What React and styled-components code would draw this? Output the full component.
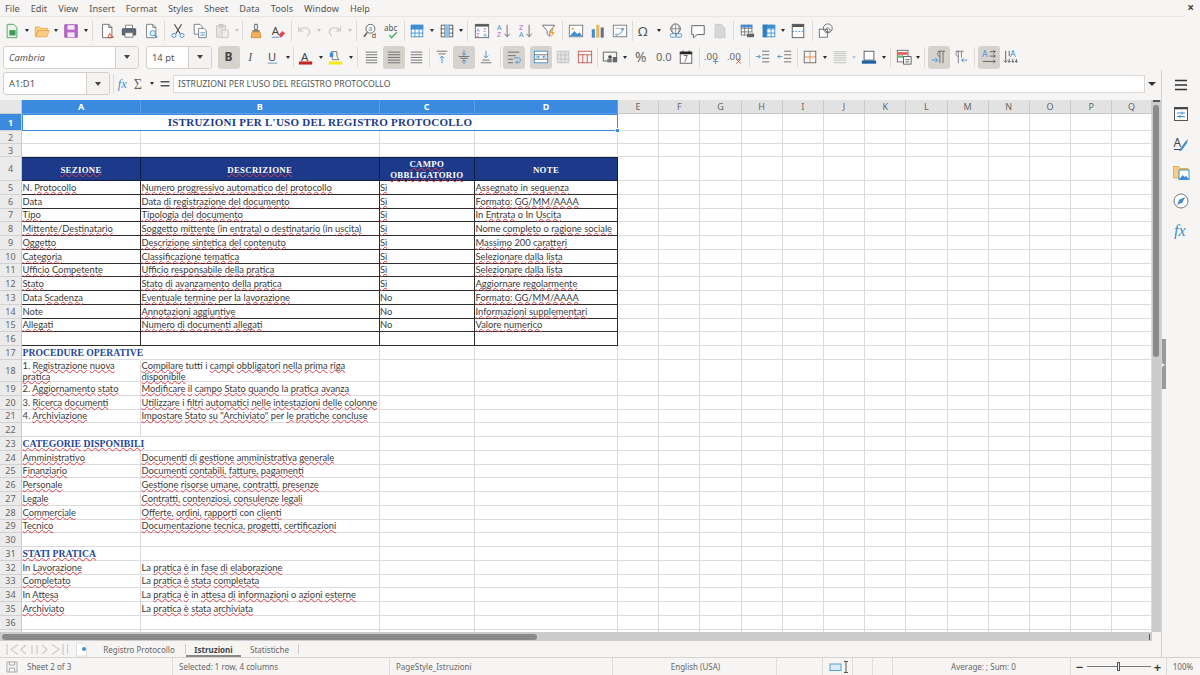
import React from "react";
import styled, { createGlobalStyle } from "styled-components";

const GlobalStyle = createGlobalStyle`
    html, body {
        margin: 0;
        padding: 0;
        background: #f6f5f4;
        overflow: hidden;
    }
    * {
        box-sizing: border-box;
    }
`;

const uiFont = `"Noto Sans", "Open Sans", sans-serif`;
const serifFont = `"Liberation Serif", "DejaVu Serif", serif`;

// layout
const Window = styled.div`
    width: 1200px;
    height: 675px;
    display: flex;
    flex-direction: column;
    overflow: hidden;
    font-family: ${uiFont};
    color: #4a4a4a;
    background: #f6f5f4;
`;

const MenuBar = styled.div`
    height: 17px;
    flex: none;
    display: flex;
    align-items: center;
    padding-left: 5px;
    gap: 11px;
    font-size: 9.2px;
    color: #555;
    border-bottom: 1px solid #e8e6e3;
    margin-right: 16px;
    position: relative;
`;

const CloseMark = styled.span`
    position: absolute;
    right: -10px;
    top: 1px;
    font-size: 12px;
    font-weight: 700;
    color: #444;
    line-height: 14px;
`;

const ToolRow = styled.div`
    height: ${(p) => p.$h}px;
    flex: none;
    display: flex;
    align-items: center;
    padding-left: ${(p) => p.$left}px;
`;

const ToolButton = styled.span`
    width: ${(p) => p.$w || 22}px;
    height: 23px;
    flex: none;
    display: inline-flex;
    align-items: center;
    justify-content: center;
    border-radius: 3px;
    background: ${(p) => (p.$active ? "#d6d3cf" : "transparent")};

    svg {
        width: 16px;
        height: 16px;
        flex: none;
        display: block;
    }
`;

const DropArrow = styled.span`
    width: 7.5px;
    height: 10px;
    flex: none;
    display: inline-flex;
    align-items: center;
    justify-content: center;

    &::after {
        content: "";
        border-left: 2.5px solid transparent;
        border-right: 2.5px solid transparent;
        border-top: 3px solid ${(p) => (p.$off ? "#c4c4c4" : "#2b2b2b")};
    }
`;

const Separator = styled.span`
    width: ${(p) => p.$w}px;
    height: 20px;
    flex: none;
    display: inline-flex;
    justify-content: center;

    &::after {
        content: "";
        width: 1px;
        height: 100%;
        background: ${(p) => (p.$line ? "#dfdcd8" : "transparent")};
    }
`;

const Combo = styled.div`
    width: ${(p) => p.$w}px;
    height: 23px;
    flex: none;
    display: flex;
    margin-right: ${(p) => p.$mr || 0}px;
    border: 1px solid #d3cfca;
    border-radius: 3px;
    background: #fff;
    overflow: hidden;
`;

const ComboText = styled.div`
    flex: 1;
    display: flex;
    align-items: center;
    padding-left: 5px;
    font-size: 9.4px;
    font-style: ${(p) => (p.$italic ? "italic" : "normal")};
    color: #555;
`;

const ComboButton = styled.div`
    width: 23px;
    flex: none;
    display: flex;
    align-items: center;
    justify-content: center;
    background: #f4f3f1;
    border-left: 1px solid #d3cfca;

    &::after {
        content: "";
        border-left: 3.5px solid transparent;
        border-right: 3.5px solid transparent;
        border-top: 4px solid #444;
    }
`;

const Content = styled.div`
    flex: 1;
    min-height: 0;
    display: flex;
`;

const MainColumn = styled.div`
    width: 1161px;
    flex: none;
    display: flex;
    flex-direction: column;
`;

const FormulaBar = styled.div`
    height: 30px;
    flex: none;
    display: flex;
    align-items: center;
    padding: 0 0 3px 3px;
`;

const FormulaInput = styled.div`
    width: 972px;
    height: 18px;
    flex: none;
    margin-left: 1px;
    padding-left: 4px;
    display: flex;
    align-items: center;
    font-size: 8.7px;
    color: #555;
    background: #fff;
    border: 1px solid #dcd9d5;
`;

const FormulaArrow = styled.span`
    margin-left: 3px;
    border-left: 4px solid transparent;
    border-right: 4px solid transparent;
    border-top: 4px solid #333;
`;

const SheetArea = styled.div`
    height: 532px;
    flex: none;
    display: flex;
    overflow: hidden;
`;

const Grid = styled.div`
    width: 1152px;
    flex: none;
    display: grid;
    grid-template-columns: 22px 119px 238.5px 95.5px 143px repeat(12, 41.2px) 1fr;
    grid-template-rows: 14px 17px 13px 13px 24px repeat(13, 13.75px) 22.25px repeat(19, 13.75px);
    background: #fff;
    font-family: Lato, "Open Sans", sans-serif;
    font-size: 9.35px;
    line-height: 11px;
    color: #3a3a3a;
    overflow: hidden;
`;

const Corner = styled.div`
    background: #e6e6e6;
    border-right: 1px solid #c9c9c9;
    border-bottom: 1px solid #c9c9c9;
`;

const ColumnHead = styled.div`
    display: flex;
    align-items: center;
    justify-content: center;
    font-family: ${uiFont};
    font-size: 9px;
    font-weight: ${(p) => (p.$on ? 700 : 400)};
    color: ${(p) => (p.$on ? "#fff" : "#666")};
    background: ${(p) => (p.$on ? "#3a8ae0" : "#e2e2e2")};
    border-right: 1px solid ${(p) => (p.$on ? "#5c9fe6" : "#c9c9c9")};
    border-bottom: 1px solid ${(p) => (p.$on ? "#5c9fe6" : "#c9c9c9")};
`;

const RowHead = styled.div`
    display: flex;
    align-items: center;
    justify-content: center;
    font-family: ${uiFont};
    font-size: 9px;
    font-weight: ${(p) => (p.$on ? 700 : 400)};
    color: ${(p) => (p.$on ? "#fff" : "#666")};
    background: ${(p) => (p.$on ? "#3a8ae0" : "#ebebeb")};
    border-right: 1px solid #c9c9c9;
    border-bottom: 1px solid #d2d2d2;
`;

const Cell = styled.div`
    padding: ${(p) => (p.$wrap ? "1px" : "0")} 0 0 0.5px;
    display: flex;
    align-items: center;
    white-space: ${(p) => (p.$wrap ? "normal" : "nowrap")};
    border-right: 1px solid ${(p) => (p.$box ? "#2d2d2d" : p.$noLine ? "transparent" : "#dcdcdc")};
    border-bottom: 1px solid ${(p) => (p.$box ? "#2d2d2d" : "#dcdcdc")};
`;

const HeadCell = styled.div`
    display: flex;
    align-items: center;
    justify-content: center;
    text-align: center;
    padding-top: 2px;
    font-family: ${serifFont};
    font-size: 8.8px;
    line-height: 11px;
    font-weight: 700;
    letter-spacing: 0.3px;
    color: #fff;
    background: #1d3a8a;
    border-right: 1px solid #101c40;
    border-bottom: 1px solid #101c40;
    border-top: 1px solid #101c40;
`;

const TitleCell = styled.div`
    grid-column: span 4;
    position: relative;
    display: flex;
    align-items: center;
    justify-content: center;
    font-family: ${serifFont};
    font-size: 11px;
    font-weight: 700;
    letter-spacing: 0.25px;
    color: #1d3a8a;
    border: 1.5px solid #3a8ae0;
    border-left-width: 1px;
`;

const SelectHandle = styled.span`
    position: absolute;
    right: -3px;
    bottom: -3px;
    width: 5px;
    height: 5px;
    background: #3a8ae0;
    border: 1px solid #fff;
`;

const SectionText = styled.span`
    padding-top: 1px;
    font-family: ${serifFont};
    font-size: 9.7px;
    font-weight: 700;
    color: #25479a;
`;

const Misspelt = styled.span`
    text-decoration: underline wavy #d8404a 0.7px;
    text-underline-offset: 0;
    text-decoration-skip-ink: none;
`;

const ScrollTrackV = styled.div`
    width: 9px;
    flex: none;
    position: relative;
    background: #cbcbcb;
`;

const ScrollThumbV = styled.div`
    position: absolute;
    top: 5px;
    left: 1px;
    width: 6px;
    height: 252px;
    border-radius: 3px;
    background: #8a8a8a;
`;

const ScrollTopMark = styled.div`
    height: 2px;
    margin: 0 1px;
    background: #555;
`;

const ScrollTrackH = styled.div`
    height: 9px;
    width: 1152px;
    flex: none;
    position: relative;
    background: #cbcbcb;
`;

const ScrollThumbH = styled.div`
    position: absolute;
    left: 2px;
    top: 2px;
    width: 535px;
    height: 6px;
    border-radius: 3px;
    background: #8a8a8a;
`;

const ScrollEndMark = styled.div`
    position: absolute;
    right: 2px;
    top: 2px;
    width: 1px;
    height: 6px;
    background: #555;
`;

const TabBar = styled.div`
    flex: 1;
    display: flex;
    align-items: center;
    padding-left: 6px;
    font-size: 8px;
    color: #666;
`;

const TabNav = styled.svg`
    width: 60px;
    height: 13px;
    flex: none;
`;

const TabDivider = styled.span`
    width: 1px;
    height: 10px;
    flex: none;
    background: #cfcbc6;
    margin: ${(p) => p.$m || "0"};
`;

const AddSheet = styled.svg`
    width: 13px;
    height: 15px;
    flex: none;
    margin: 0 7px 0 7px;
`;

const Tab = styled.span`
    height: 100%;
    width: ${(p) => p.$w}px;
    flex: none;
    display: flex;
    align-items: center;
    justify-content: center;
    font-weight: ${(p) => (p.$on ? 700 : 400)};
    color: ${(p) => (p.$on ? "#444" : "#666")};
    border-bottom: 2px solid ${(p) => (p.$on ? "#8a8a8a" : "transparent")};
    padding-top: 2px;
`;

const StatusBar = styled.div`
    height: 18px;
    flex: none;
    display: flex;
    align-items: center;
    font-size: 8px;
    color: #666;
    border-top: 1px solid #d6d3cf;
`;

const StatusCell = styled.div`
    width: ${(p) => p.$w}px;
    height: 100%;
    flex: none;
    display: flex;
    align-items: center;
    justify-content: ${(p) => p.$justify || "flex-start"};
    padding-left: ${(p) => p.$pad || 0}px;
    border-right: 1px solid ${(p) => (p.$plain ? "transparent" : "#e0ddd9")};
    gap: ${(p) => p.$gap || 0}px;
    position: relative;
`;

const StatusIcon = styled.svg`
    width: 14px;
    height: 14px;
    flex: none;
`;

const ZoomTrack = styled.div`
    width: 64px;
    height: 1px;
    background: #777;
    position: relative;
    flex: none;
`;

const ZoomKnob = styled.div`
    position: absolute;
    left: 30px;
    top: -4px;
    width: 3px;
    height: 9px;
    background: #eee;
    border: 1px solid #555;
`;

const ZoomSign = styled.span`
    font-size: 13px;
    font-weight: 600;
    color: #333;
    width: 14px;
    text-align: center;
    line-height: 12px;
`;

const Sidebar = styled.div`
    flex: 1;
    position: relative;
    display: flex;
    flex-direction: column;
    align-items: center;
    border-left: 1px solid #d6d3cf;
    padding: 4px 0 0 0;
    gap: 7px;
`;

const SideIcon = styled.span`
    width: 22px;
    height: 22px;
    flex: none;
    display: flex;
    align-items: center;
    justify-content: center;

    svg {
        width: 18px;
        height: 18px;
        display: block;
    }
`;

const SideGrip = styled.div`
    position: absolute;
    left: 0;
    top: 269px;
    width: 4px;
    height: 50px;
    background: #9a9a9a;

    &::after {
        content: "";
        position: absolute;
        left: 0;
        top: 24px;
        border-left: 3px solid #eee;
        border-top: 2.5px solid transparent;
        border-bottom: 2.5px solid transparent;
    }
`;

// icons, all drawn on an 18x18 box
const T = ({ x, y, s = 9, c = "#444", w = 400, i, f = "Noto Sans", children }) => (
    <text x={x} y={y} fontSize={s} fill={c} fontWeight={w} fontStyle={i ? "italic" : "normal"} fontFamily={f}>
        {children}
    </text>
);
const Lines = ({ c = "#555", rows, x1 = 2, x2 = 16 }) => (
    <path d={rows.map((y) => `M${x1} ${y}H${x2}`).join("")} stroke={c} fill="none" />
);
const Doc = ({ c = "#777", fill = "#fff" }) => (
    <path d="M4 1.5h7l3.5 3.5v11.5H4zM11 1.5V5h3.5" fill={fill} stroke={c} strokeLinejoin="round" />
);
const GridBox = ({ c = "#3f8fd0", x = 2, y = 2, w = 14, h = 14, fill = "#fff" }) => (
    <g stroke={c} fill="none">
        <rect x={x + 0.5} y={y + 0.5} width={w - 1} height={h - 1} fill={fill} />
        <path d={`M${x} ${y + h / 3}H${x + w}M${x} ${y + (2 * h) / 3}H${x + w}M${x + w / 3} ${y}V${y + h}M${x + (2 * w) / 3} ${y}V${y + h}`} />
    </g>
);

const icons = {
    new: (
        <g>
            <path d="M3.5 1.5h7.5l3.5 3.5v11.5h-11z" fill="#e9f4ec" stroke="#43a05c" />
            <rect x="6" y="8" width="7" height="6" fill="#3f9a58" />
        </g>
    ),
    open: (
        <path d="M1.5 15V4.5h5l1.5 1.5h7v2.5H5zM1.5 15.5L4.5 8.5H17L14.5 15.5z" fill="#f9cf85" stroke="#e8a94e" strokeLinejoin="round" />
    ),
    save: (
        <g>
            <path d="M2 2h14v14H2z" fill="#b768c8" stroke="#9c4fb0" />
            <rect x="5" y="2.5" width="8" height="5" fill="#f6e6f9" />
            <rect x="5" y="10.5" width="8" height="5.5" fill="#f6e6f9" />
        </g>
    ),
    pdf: (
        <g>
            <Doc c="#666" />
            <path d="M10 16.5l2-5 1.5 3 3 1.5-4 .5z" fill="none" stroke="#d8453c" />
        </g>
    ),
    print: (
        <g>
            <path d="M5 2.5h8v4H5z" fill="#fff" stroke="#777" />
            <path d="M1.5 6.5h15v7h-15z" fill="#5d6a73" stroke="#4b555c" />
            <path d="M4.5 11h9v5h-9z" fill="#fff" stroke="#777" />
        </g>
    ),
    preview: (
        <g>
            <Doc c="#777" />
            <circle cx="11" cy="11.5" r="3" fill="#e6f2fb" stroke="#3f8fd0" />
            <path d="M13 13.5l3 3" stroke="#3f8fd0" strokeWidth="1.4" />
        </g>
    ),
    cut: (
        <g fill="none">
            <path d="M5 1.5l6.5 10.5M13 1.5L6.5 12" stroke="#444" strokeWidth="1.2" />
            <circle cx="4.5" cy="14" r="2.3" stroke="#3f8fd0" />
            <circle cx="13.5" cy="14" r="2.3" stroke="#3f8fd0" />
        </g>
    ),
    copy: (
        <g fill="#fff" stroke="#777">
            <path d="M2.5 1.5h6.5l2.5 2.5v8.5h-9z" />
            <path d="M7.5 6h6l2.5 2.5v8h-8.5z" />
            <path d="M9.5 11h5M9.5 13.5h5" stroke="#3f8fd0" />
        </g>
    ),
    paste: (
        <g fill="#e6e4e1" stroke="#c6c4c1">
            <rect x="3" y="3" width="10" height="13" />
            <rect x="6" y="1.5" width="4" height="3" fill="#d0cecb" />
            <rect x="9" y="8" width="7" height="8.5" fill="#f0efed" />
        </g>
    ),
    clone: (
        <g>
            <path d="M7.5 1.5h3v6h-3z" fill="#fff" stroke="#555" />
            <path d="M5 8h8v2H5z" fill="#777" />
            <path d="M4.5 10h9l1 6.5H3.5z" fill="#f2b25c" stroke="#d98f2f" />
        </g>
    ),
    clear: (
        <g>
            <T x="2" y="13" s={13} c="#444">A</T>
            <path d="M2 16h8" stroke="#3f8fd0" />
            <path d="M10 13l4-4 3 2.5-4 4.5h-2z" fill="#e8454a" />
        </g>
    ),
    undo: <path d="M3 4v5h5M3.5 9c2-4 8-5 11-1.5 1.5 2 1 5-2 7.5" fill="none" stroke="#c9c7c4" strokeWidth="1.2" />,
    redo: <path d="M15 4v5h-5M14.5 9c-2-4-8-5-11-1.5-1.5 2-1 5 2 7.5" fill="none" stroke="#c9c7c4" strokeWidth="1.2" />,
    find: (
        <g>
            <circle cx="9.5" cy="6.5" r="5" fill="#fff" stroke="#555" />
            <T x="7" y="9" s={8} c="#3f8fd0">a</T>
            <path d="M6 10.5l-4 5" stroke="#555" strokeWidth="1.6" />
            <T x="11" y="17" s={8} c="#444">d</T>
        </g>
    ),
    spell: (
        <g>
            <T x="0" y="9" s={9} c="#555">abc</T>
            <path d="M6 13.5l2.5 3 6-6" fill="none" stroke="#4aa85e" strokeWidth="1.5" />
        </g>
    ),
    rowgrid: (
        <g>
            <GridBox c="#3f8fd0" />
            <rect x="2" y="2" width="14" height="5" fill="#3f8fd0" />
        </g>
    ),
    colgrid: (
        <g>
            <GridBox c="#555" />
            <rect x="6.5" y="2" width="5" height="14" fill="#8fc2e8" />
        </g>
    ),
    sort: (
        <g>
            <rect x="1.5" y="1.5" width="15" height="15" fill="#fff" stroke="#666" />
            <rect x="1.5" y="1.5" width="15" height="2.5" fill="#555" />
            <T x="2.5" y="10" s={6} c="#3f8fd0">A</T>
            <T x="2.5" y="16" s={6} c="#c85fc8">Z</T>
            <T x="10.5" y="10" s={6} c="#c85fc8">Z</T>
            <T x="10.5" y="16" s={6} c="#3f8fd0">A</T>
        </g>
    ),
    az: (
        <g>
            <T x="1" y="8" s={8} c="#3f8fd0">A</T>
            <T x="1" y="16" s={8} c="#c85fc8">Z</T>
            <path d="M12.5 2v13M9.5 12l3 3.5 3-3.5" fill="none" stroke="#666" />
        </g>
    ),
    za: (
        <g>
            <T x="1" y="8" s={8} c="#c85fc8">Z</T>
            <T x="1" y="16" s={8} c="#3f8fd0">A</T>
            <path d="M12.5 2v13M9.5 12l3 3.5 3-3.5" fill="none" stroke="#666" />
        </g>
    ),
    filter: (
        <g>
            <path d="M1.5 2.5h14l-5.5 6.5v6l-3-2.5v-3.5z" fill="#fff" stroke="#666" strokeLinejoin="round" />
            <path d="M13 6l-3 5.5h2.5l-1.5 5 4.5-6.5h-2.5l1.5-4z" fill="#f0a63c" />
        </g>
    ),
    image: (
        <g>
            <rect x="1.5" y="2.5" width="15" height="13" fill="#fff" stroke="#777" />
            <circle cx="5.5" cy="6.5" r="1.5" fill="#f0b65c" />
            <path d="M2 15l5-6 3.5 3.5 2.5-2 3 4.5z" fill="#3f8fd0" />
        </g>
    ),
    chart: (
        <g>
            <rect x="2" y="7" width="3.5" height="9.5" fill="#3f8fd0" />
            <rect x="7" y="2" width="3.5" height="14.5" fill="#f0b65c" />
            <rect x="12" y="5" width="3.5" height="11.5" fill="#6a747c" />
        </g>
    ),
    pivot: (
        <g fill="none">
            <rect x="1.5" y="2.5" width="15" height="13" fill="#fff" stroke="#777" />
            <path d="M4 6h10" stroke="#aaa" />
            <path d="M6 13c3 0 5-2 6-6M10.5 8l1.5-2 1.500 2M5 11.5l-1 2 2 .5" stroke="#3f8fd0" />
        </g>
    ),
    omega: <T x="1" y="14.5" s={15} c="#555">Ω</T>,
    link: (
        <g fill="none">
            <circle cx="8.5" cy="6.5" r="5.5" stroke="#666" />
            <path d="M3 6.5h11M8.5 1v11M5.5 2.5c-1.5 2.5-1.5 6 0 8M11.5 2.5c1.5 2.5 1.5 6 0 8" stroke="#666" strokeWidth="0.7" />
            <rect x="2.5" y="12" width="7" height="4" rx="2" stroke="#3f8fd0" fill="#fff" />
            <rect x="8.5" y="12" width="7" height="4" rx="2" stroke="#3f8fd0" />
        </g>
    ),
    comment: <path d="M2 3h14v10H8l-4 3.5V13H2z" fill="#fff" stroke="#555" strokeLinejoin="round" />,
    note: <path d="M3.5 1.5h7l4 4v11h-11z" fill="#d6d6d6" stroke="#c8c8c8" />,
    printarea: (
        <g>
            <GridBox c="#777" w={13} h={12} fill="#fff" />
            <rect x="2" y="2" width="13" height="3" fill="#3f8fd0" />
            <path d="M9 12h8v4H9z" fill="#666" />
            <path d="M11 10h4v2h-4z" fill="#ccc" />
        </g>
    ),
    freeze: (
        <g>
            <GridBox c="#3f8fd0" />
            <rect x="2" y="2" width="14" height="4" fill="#3f8fd0" />
            <rect x="2" y="2" width="4.5" height="14" fill="#2f7fbf" />
        </g>
    ),
    split: (
        <g fill="none">
            <rect x="2.5" y="1.5" width="13" height="15" fill="#fff" stroke="#555" />
            <rect x="2.5" y="1.5" width="13" height="3" fill="#555" />
            <path d="M2.5 9.5h13" stroke="#3f8fd0" strokeDasharray="2 1.5" />
        </g>
    ),
    shapes: (
        <g fill="#fff" stroke="#666">
            <rect x="1.5" y="7" width="9" height="9" />
            <circle cx="11" cy="6" r="5" fill="none" />
            <path d="M8 8l3-3 3 3-3 3z" fill="none" />
        </g>
    ),
    bold: <T x="4" y="14" s={13.5} w={700} c="#444">B</T>,
    italic: <T x="6" y="14" s={13.5} i c="#555" f="Liberation Serif">I</T>,
    underline: (
        <g>
            <T x="3.5" y="13" s={12.5} c="#444">U</T>
            <path d="M3 16h11" stroke="#8fb8df" strokeWidth="1.5" />
        </g>
    ),
    fontcolor: (
        <g>
            <T x="3.5" y="13" s={13} c="#444">A</T>
            <rect x="1" y="14" width="15" height="3.5" fill="#c5262c" />
        </g>
    ),
    highlight: (
        <g>
            <path d="M4 3h6v5l2 4H5z" fill="#fff" stroke="#666" />
            <rect x="2" y="4" width="4" height="5" fill="#3f8fd0" />
            <rect x="1" y="14" width="15" height="3.5" fill="#f7e91c" />
        </g>
    ),
    alignL: <Lines rows={[3.5, 6.5, 9.5, 12.5, 15.5]} x2={15} c="#666" />,
    alignC: <Lines rows={[3.5, 6.5, 9.5, 12.5, 15.5]} c="#666" />,
    alignR: <Lines rows={[3.5, 6.5, 9.5, 12.5, 15.5]} x1={3} c="#666" />,
    alignTop: (
        <g fill="none">
            <path d="M3 2.5h12M5 5.5h8" stroke="#666" />
            <path d="M9 16V8M6.5 10.5L9 8l2.5 2.5" stroke="#3f8fd0" />
        </g>
    ),
    alignMid: (
        <g fill="none">
            <path d="M3 8.5h12M5 10.5h8" stroke="#666" />
            <path d="M9 1v6M6.5 4.5L9 7l2.5-2.5M9 17v-5M6.5 14.5L9 12l2.5 2.5" stroke="#3f8fd0" />
        </g>
    ),
    alignBot: (
        <g fill="none">
            <path d="M3 15.5h12M5 12.5h8" stroke="#666" />
            <path d="M9 2v8M6.5 7.5L9 10l2.5-2.5" stroke="#3f8fd0" />
        </g>
    ),
    wrap: (
        <g fill="none">
            <path d="M2 3.5h13M2 7.5h9M2 11.5h6M2 15.5h6" stroke="#666" />
            <path d="M9 10h5c3 0 3 5 0 5h-2M13 13l-2 2 2 2" stroke="#3f8fd0" />
        </g>
    ),
    merge: (
        <g fill="none">
            <rect x="1.5" y="2.5" width="15" height="13" stroke="#3f8fd0" fill="#fff" />
            <path d="M1.5 6.5h15M1.5 11.5h15" stroke="#666" />
            <path d="M3 9h4M15 9h-4M5.5 7.5L7 9l-1.5 1.5M12.5 7.5L11 9l1.5 1.5" stroke="#3f8fd0" />
        </g>
    ),
    merge2: <GridBox c="#c2c2c2" fill="#e4e4e4" />,
    unmerge: (
        <g fill="none" stroke="#c8534c">
            <rect x="1.5" y="2.5" width="15" height="13" />
            <path d="M1.5 6.5h15M6.5 6.5v9M11.5 6.5v9" />
        </g>
    ),
    numfmt: (
        <g>
            <path d="M1.5 3.5h15v10" fill="none" stroke="#555" />
            <path d="M1.5 3.5v10h5" fill="none" stroke="#555" />
            <circle cx="9" cy="9" r="2" fill="#444" />
            <rect x="6" y="11" width="5" height="4" fill="#777" />
            <rect x="12" y="9" width="5" height="6" fill="#666" />
        </g>
    ),
    percent: <T x="1" y="14.5" s={15.5} c="#666">%</T>,
    zero: <T x="0" y="14" s={12.5} c="#666">0.0</T>,
    date: (
        <g>
            <rect x="2.5" y="3.5" width="13" height="12.5" fill="#fff" stroke="#555" />
            <path d="M2.5 3.5h13v2h-13zM5.5 1.5v2M12.5 1.5v2" stroke="#444" />
            <T x="6" y="14.5" s={9} c="#555">7</T>
        </g>
    ),
    addDec: (
        <g>
            <T x="0" y="12" s={11} c="#666">.00</T>
            <path d="M13 11v6M10 14h6" stroke="#3f8fd0" />
        </g>
    ),
    delDec: (
        <g>
            <T x="0" y="12" s={11} c="#666">.00</T>
            <path d="M10.5 11.5l5 5M15.5 11.5l-5 5" stroke="#d8453c" />
        </g>
    ),
    indent: (
        <g fill="none">
            <path d="M8 2.5h8M8 6.5h8M8 10.5h8M8 14.5h8" stroke="#666" />
            <path d="M1 8.5h5M4 6.5l2 2-2 2" stroke="#3f8fd0" />
        </g>
    ),
    outdent: (
        <g fill="none">
            <path d="M8 2.5h8M8 6.5h8M8 10.5h8M8 14.5h8" stroke="#666" />
            <path d="M6 8.5H1M3 6.5l-2 2 2 2" stroke="#3f8fd0" />
        </g>
    ),
    border: (
        <g fill="none">
            <path d="M2.5 9h13M9 2.5v13" stroke="#e08a4c" />
            <rect x="2.5" y="2.5" width="13" height="13" stroke="#666" />
        </g>
    ),
    borderStyle: <Lines rows={[3, 5, 7.5, 10, 12.5, 15.5]} c="#bbb" />,
    borderColor: (
        <g>
            <rect x="3.5" y="2.5" width="11" height="10" fill="#fff" stroke="#555" />
            <rect x="1" y="13" width="16" height="3.5" fill="#1f5f9e" />
        </g>
    ),
    cond: (
        <g>
            <rect x="1.5" y="1.5" width="12" height="13" fill="#fff" stroke="#666" />
            <path d="M2 5h11" stroke="#e0605a" strokeWidth="3" />
            <path d="M2 8.5h6" stroke="#5fb870" strokeWidth="2.5" />
            <rect x="8.5" y="8.5" width="8.5" height="8.5" fill="#fff" stroke="#555" />
            <path d="M10.5 12h4.5M10.5 14.5h4.5" stroke="#555" />
        </g>
    ),
    ltr: (
        <g fill="none">
            <path d="M8 2.5h8M10 2.5v13.5M13.5 2.5v13.5M10 2.5c-3 0-4 5 0 6" stroke="#666" />
            <path d="M1 12.5h6M5 10l2.5 2.5L5 15" stroke="#3f8fd0" />
        </g>
    ),
    rtl: (
        <g fill="none">
            <path d="M3 2.5h9M6 2.5v13.5M9.5 2.5v7M6 2.5c-3 0-4 5 0 6" stroke="#777" />
            <path d="M16 12.5h-6M12 10l-2.5 2.5L12 15" stroke="#3f8fd0" />
        </g>
    ),
    horiz: (
        <g fill="none">
            <T x="1" y="9" s={10} c="#3f8fd0">A</T>
            <path d="M10 3h6M14 1l2 2-2 2M10 8h6M14 6l2 2-2 2M2 14h14M14 12l2 2-2 2" stroke="#555" />
        </g>
    ),
    vert: (
        <g fill="none">
            <T x="8" y="9" s={10} c="#3f8fd0">A</T>
            <path d="M3 2v13M1 13l2 2 2-2M7 11v4M5.5 13.5L7 15l1.5-1.5M11 11v4M9.5 13.5L11 15l1.5-1.5M15 11v4M13.5 13.5L15 15l1.5-1.5" stroke="#555" />
            <path d="M7 2v6" stroke="#555" />
        </g>
    ),
    fx: <T x="2" y="14" s={14} i c="#3f8fd0" f="Liberation Serif">fx</T>,
    sigma: <T x="2" y="15" s={16} c="#666" f="Liberation Serif">Σ</T>,
    equal: <path d="M4 6.5h10M4 11h10" stroke="#555" strokeWidth="1.6" />,
    menu: <path d="M3 4.5h12M3 9h12M3 13.5h12" stroke="#333" strokeWidth="1.5" />,
    props: (
        <g>
            <rect x="2.5" y="2.5" width="13" height="13" fill="#fff" stroke="#555" />
            <rect x="2.5" y="2.5" width="13" height="1.8" fill="#444" />
            <path d="M5 8h8M5 11.5h8" stroke="#3f8fd0" />
            <path d="M10 6.5v3M8 10v3" stroke="#3f8fd0" />
        </g>
    ),
    styles: (
        <g>
            <T x="1.5" y="12.5" s={12} c="#444">A</T>
            <path d="M8 15l5-7 3-3-1 4-5 7c-1 1-3 1-3 1z" fill="#3f8fd0" />
            <path d="M2 15.5h6" stroke="#444" />
        </g>
    ),
    gallery: (
        <g>
            <path d="M1.5 15V3.5h5l1.5 2h8v9.5z" fill="#f9cf85" stroke="#e8a94e" />
            <rect x="7" y="7" width="10" height="9.5" fill="#fff" stroke="#3f8fd0" />
            <path d="M7.5 16l3-4 2 2 1.5-1 3 3z" fill="#3f8fd0" />
        </g>
    ),
    navigator: (
        <g>
            <circle cx="9" cy="9" r="7" fill="#fff" stroke="#777" />
            <path d="M13 5l-2.5 5.5L5 13l2.5-5.5z" fill="#3f8fd0" />
        </g>
    ),
    sideFx: <T x="2" y="15" s={16} i c="#3f8fd0" f="Liberation Serif">fx</T>,
    disk: (
        <g fill="none" stroke="#999">
            <path d="M2.5 2.5h13v13h-13z" />
            <path d="M5.5 2.5v4h7v-4M5.5 15.5v-5h7v5" />
        </g>
    ),
};

// toolbar layout: ">" dropdown, "!" disabled dropdown, "|n" separator, "_n" blank gap, "name*" pressed
const standardBar = [
    "new", ">", "open", ">", "save", ">", "|6.5", "pdf", "print", "preview", "|5",
    "cut", "copy", "paste", "!", "|4.5", "clone", "clear", "|4", "undo", "!", "_1.5", "redo", "!", "|5.5",
    "find", "spell", "|3", "rowgrid", ">", "colgrid", ">", "|5.5", "sort", "az", "za", "_1", "filter", "|5",
    "image", "chart", "pivot", "|3", "omega", ">", "_1.5", "link", "comment", "note", "|5",
    "printarea", "freeze", ">", "split", "|6", "shapes",
];

const formatBar = [
    "bold*", "italic", "underline", ">", "|3.5", "fontcolor", ">", "_0.5", "highlight", ">", "|6.5",
    "alignL", "alignC*", "alignR", "|4", "alignTop", "alignMid*", "alignBot", "|6", "wrap*", "_5", "merge*", "merge2", "unmerge", "|3",
    "numfmt", ">", "_2.5", "percent", "zero", "date", "|4", "addDec", "_1", "delDec", "|6", "indent", "outdent", "|3",
    "border", ">", "borderStyle", "!", "borderColor", ">", "|5", "cond", ">", "|5.5", "ltr*", "rtl", "|6", "horiz*", "vert",
];

const Icon = ({ name, active, w }) => (
    <ToolButton $active={active} $w={w}>
        <svg viewBox="0 0 18 18">{icons[name]}</svg>
    </ToolButton>
);

const ToolItems = ({ items }) =>
    items.map((item, i) => {
        if (item === ">") return <DropArrow key={i} />;
        if (item === "!") return <DropArrow key={i} $off />;
        if (item[0] === "|") return <Separator key={i} $w={parseFloat(item.slice(1))} $line />;
        if (item[0] === "_") return <Separator key={i} $w={parseFloat(item.slice(1))} />;
        const active = item.endsWith("*");
        return <Icon key={i} name={active ? item.slice(0, -1) : item} active={active} />;
    });

// sheet content: [A, B, C, D] per row, starting at row 5
const tableRows = [
    ["N. Protocollo", "Numero progressivo automatico del protocollo", "Sì", "Assegnato in sequenza"],
    ["Data", "Data di registrazione del documento", "Sì", "Formato: GG/MM/AAAA"],
    ["Tipo", "Tipologia del documento", "Sì", "In Entrata o In Uscita"],
    ["Mittente/Destinatario", "Soggetto mittente (in entrata) o destinatario (in uscita)", "Sì", "Nome completo o ragione sociale"],
    ["Oggetto", "Descrizione sintetica del contenuto", "Sì", "Massimo 200 caratteri"],
    ["Categoria", "Classificazione tematica", "Sì", "Selezionare dalla lista"],
    ["Ufficio Competente", "Ufficio responsabile della pratica", "Sì", "Selezionare dalla lista"],
    ["Stato", "Stato di avanzamento della pratica", "Sì", "Aggiornare regolarmente"],
    ["Data Scadenza", "Eventuale termine per la lavorazione", "No", "Formato: GG/MM/AAAA"],
    ["Note", "Annotazioni aggiuntive", "No", "Informazioni supplementari"],
    ["Allegati", "Numero di documenti allegati", "No", "Valore numerico"],
    ["", "", "", ""],
];

const lowerRows = {
    17: { section: "PROCEDURE OPERATIVE", plain: true, noLine: true },
    18: { a: "1. Registrazione nuova pratica", b: "Compilare tutti i campi obbligatori nella prima riga disponibile", wrap: true },
    19: { a: "2. Aggiornamento stato", b: "Modificare il campo Stato quando la pratica avanza" },
    20: { a: "3. Ricerca documenti", b: "Utilizzare i filtri automatici nelle intestazioni delle colonne" },
    21: { a: "4. Archiviazione", b: 'Impostare Stato su "Archiviato" per le pratiche concluse' },
    23: { section: "CATEGORIE DISPONIBILI", noLine: true },
    24: { a: "Amministrativo", b: "Documenti di gestione amministrativa generale" },
    25: { a: "Finanziario", b: "Documenti contabili, fatture, pagamenti" },
    26: { a: "Personale", b: "Gestione risorse umane, contratti, presenze" },
    27: { a: "Legale", b: "Contratti, contenziosi, consulenze legali" },
    28: { a: "Commerciale", b: "Offerte, ordini, rapporti con clienti" },
    29: { a: "Tecnico", b: "Documentazione tecnica, progetti, certificazioni" },
    31: { section: "STATI PRATICA" },
    32: { a: "In Lavorazione", b: "La pratica è in fase di elaborazione" },
    33: { a: "Completato", b: "La pratica è stata completata" },
    34: { a: "In Attesa", b: "La pratica è in attesa di informazioni o azioni esterne" },
    35: { a: "Archiviato", b: "La pratica è stata archiviata" },
};

const okWords = new Set(["Data", "in", "o", "per", "la", "In", "Nome", "No", "Note", "200", "tutti", "i", "con", "La", "NOTE", "1.", "2.", "3.", "4.", "N."]);

// words the spell checker flagged get the wavy red line
const Spelled = ({ text }) =>
    text.split(" ").map((word, i) => {
        const bare = word.replace(/^[("]+|[),"]+$/g, "");
        return (
            <React.Fragment key={i}>
                {i > 0 && " "}
                {okWords.has(bare) ? word : <Misspelt>{word}</Misspelt>}
            </React.Fragment>
        );
    });

const columns = ["A", "B", "C", "D", "E", "F", "G", "H", "I", "J", "K", "L", "M", "N", "O", "P", "Q"];
const headers = ["SEZIONE", "DESCRIZIONE", "CAMPO OBBLIGATORIO", "NOTE"];

// columns E to Q are empty on every row
const EmptyCells = () => Array.from({ length: 13 }, (_, i) => <Cell key={i} />);

const SheetRow = ({ n }) => {
    if (n === 1) {
        return (
            <>
                <RowHead $on>1</RowHead>
                <TitleCell>
                    ISTRUZIONI PER L'USO DEL REGISTRO PROTOCOLLO
                    <SelectHandle />
                </TitleCell>
                <EmptyCells />
            </>
        );
    }
    if (n === 4) {
        return (
            <>
                <RowHead>4</RowHead>
                {headers.map((h) => (
                    <HeadCell key={h}>
                        <span>
                            <Spelled text={h} />
                        </span>
                    </HeadCell>
                ))}
                <EmptyCells />
            </>
        );
    }
    if (n >= 5 && n <= 16) {
        return (
            <>
                <RowHead>{n}</RowHead>
                {tableRows[n - 5].map((text, i) => (
                    <Cell key={i} $box>
                        <span>
                            <Spelled text={text} />
                        </span>
                    </Cell>
                ))}
                <EmptyCells />
            </>
        );
    }
    const row = lowerRows[n] || {};
    return (
        <>
            {/* row 37 only peeks out above the scrollbar, its number stays hidden */}
            <RowHead>{n < 37 ? n : ""}</RowHead>
            <Cell $noLine={row.noLine} $wrap={row.wrap}>
                {row.section ? (
                    <SectionText>{row.plain ? row.section : <Spelled text={row.section} />}</SectionText>
                ) : (
                    <span>{row.a && <Spelled text={row.a} />}</span>
                )}
            </Cell>
            <Cell $wrap={row.wrap}>
                <span>{row.b && <Spelled text={row.b} />}</span>
            </Cell>
            <Cell />
            <Cell />
            <EmptyCells />
        </>
    );
};

const rowNumbers = Array.from({ length: 37 }, (_, i) => i + 1);
const sideIcons = ["menu", "props", "styles", "gallery", "navigator", "sideFx"];

const App = () => {
    return (
        <>
            <GlobalStyle />
            <Window>
                <MenuBar>
                    {["File", "Edit", "View", "Insert", "Format", "Styles", "Sheet", "Data", "Tools", "Window", "Help"].map((m) => (
                        <span key={m}>{m}</span>
                    ))}
                    <CloseMark>×</CloseMark>
                </MenuBar>
                <ToolRow $h={27} $left={1}>
                    <ToolItems items={standardBar} />
                </ToolRow>
                <ToolRow $h={26} $left={3}>
                    <Combo $w={136} $mr={7}>
                        <ComboText $italic>Cambria</ComboText>
                        <ComboButton />
                    </Combo>
                    <Combo $w={66} $mr={6}>
                        <ComboText>14 pt</ComboText>
                        <ComboButton />
                    </Combo>
                    <ToolItems items={formatBar} />
                </ToolRow>
                <Content>
                    <MainColumn>
                        <FormulaBar>
                            <Combo $w={107} $mr={3}>
                                <ComboText>A1:D1</ComboText>
                                <ComboButton />
                            </Combo>
                            <Separator $w={1} $line />
                            <Icon name="fx" w={20} />
                            <Icon name="sigma" w={11} />
                            <Separator $w={3} />
                            <DropArrow />
                            <Separator $w={1.5} />
                            <Icon name="equal" w={15} />
                            <FormulaInput>ISTRUZIONI PER L'USO DEL REGISTRO PROTOCOLLO</FormulaInput>
                            <FormulaArrow />
                        </FormulaBar>
                        <SheetArea>
                            <Grid>
                                <Corner />
                                {columns.map((c, i) => (
                                    <ColumnHead key={c} $on={i < 4}>
                                        {c}
                                    </ColumnHead>
                                ))}
                                {rowNumbers.map((n) => (
                                    <SheetRow key={n} n={n} />
                                ))}
                            </Grid>
                            <ScrollTrackV>
                                <ScrollTopMark />
                                <ScrollThumbV />
                            </ScrollTrackV>
                        </SheetArea>
                        <ScrollTrackH>
                            <ScrollThumbH />
                            <ScrollEndMark />
                        </ScrollTrackH>
                        <TabBar>
                            <TabNav viewBox="0 0 60 13">
                                <g fill="none" stroke="#d2d0cd" strokeWidth="1.4">
                                    <path d="M1 1v11M12 1.5L5 6.5l7 5M20 2l-5 4.5 5 4.5M26 2v9M31 2v9M36 2l5 4.5-5 4.5M46 1.5l7 5-7 5M57 1v11" />
                                </g>
                            </TabNav>
                            <TabDivider $m="0 0 0 1px" />
                            <AddSheet viewBox="0 0 13 15">
                                <path d="M1.5 1h7l3 3v10h-10z" fill="#fff" stroke="#ddd" />
                                <circle cx="9" cy="7" r="2" fill="#3f8fd0" />
                            </AddSheet>
                            <Tab $w={88}>Registro Protocollo</Tab>
                            <TabDivider $m="0 0 0 2px" />
                            <Tab $w={55} $on>
                                Istruzioni
                            </Tab>
                            <Tab $w={57}>Statistiche</Tab>
                            <TabDivider />
                        </TabBar>
                    </MainColumn>
                    <Sidebar>
                        {sideIcons.map((name) => (
                            <SideIcon key={name}>
                                <svg viewBox="0 0 18 18">{icons[name]}</svg>
                            </SideIcon>
                        ))}
                        <SideGrip />
                    </Sidebar>
                </Content>
                <StatusBar>
                    <StatusCell $w={173} $pad={5} $gap={8}>
                        <StatusIcon viewBox="0 0 18 18">{icons.disk}</StatusIcon>
                        Sheet 2 of 3
                    </StatusCell>
                    <StatusCell $w={217} $pad={6}>Selected: 1 row, 4 columns</StatusCell>
                    <StatusCell $w={223} $pad={6}>PageStyle_Istruzioni</StatusCell>
                    <StatusCell $w={164} $justify="center" $pad={2}>English (USA)</StatusCell>
                    <StatusCell $w={46} />
                    <StatusCell $w={30} $pad={6}>
                        <svg width="14" height="10" viewBox="0 0 14 10">
                            <rect x="1" y="2" width="11" height="6.5" fill="#dcecf6" stroke="#5aa0cc" />
                        </svg>
                        <svg width="6" height="12" viewBox="0 0 6 12">
                            <path d="M1 .5h4M3 .5v11M1 11.5h4" stroke="#555" fill="none" />
                        </svg>
                    </StatusCell>
                    <StatusCell $w={20} />
                    <StatusCell $w={20} />
                    <StatusCell $w={178} $justify="center" $pad={4}>Average: ; Sum: 0</StatusCell>
                    <StatusCell $w={96} $justify="center">
                        <ZoomSign>−</ZoomSign>
                        <ZoomTrack>
                            <ZoomKnob />
                        </ZoomTrack>
                        <ZoomSign>+</ZoomSign>
                    </StatusCell>
                    <StatusCell $w={33} $justify="center" $plain>100%</StatusCell>
                </StatusBar>
            </Window>
        </>
    );
};

export default App;
